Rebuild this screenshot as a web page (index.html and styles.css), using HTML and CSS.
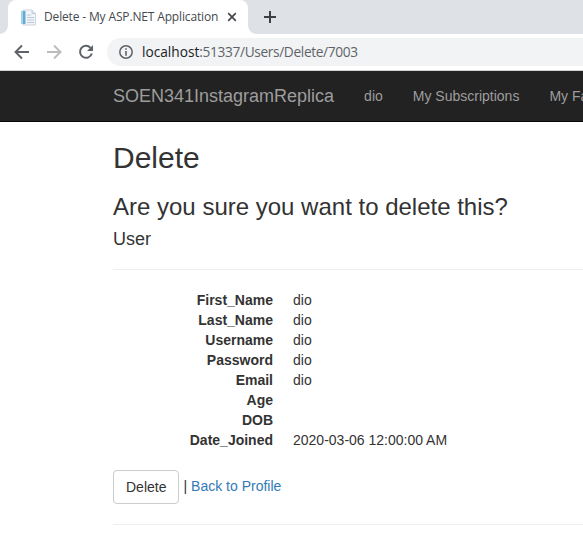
FILE: index.html
```html
<!DOCTYPE html>
<html lang="en"><head><meta charset="utf-8"><title>Delete - My ASP.NET Application</title><link rel="stylesheet" href="styles.css"></head>
<body>
<div class="tabs">
<div class="tab">
<svg class="favicon" width="17" height="17" viewBox="0 0 17 17"><path d="M3 1h9l3.500 3.500v11.500H3z" fill="#f1f5f9" stroke="#ccd3dc"/><path d="M12 1v3.500h3.500" fill="#dce5ef" stroke="#c2cad5"/><path d="M1 2h4.500v13H1z" fill="#62abd4"/><path d="M1 2h2v13H1z" fill="#a4d3e8"/><path d="M7 6h4M7 8.500h7M7 11h7M7 13.500h7" stroke="#bdc7d3"/></svg>
<span class="title">Delete - My ASP.NET Application</span>
<svg class="close" width="10" height="10" viewBox="0 0 10 10"><path d="M1.200 1.200l7.600 7.600M8.800 1.200L1.200 8.800" stroke="#45494d" stroke-width="1.700"/></svg>
</div>
<svg class="plus" width="12" height="12" viewBox="0 0 12 12"><path d="M6 0v12M0 6h12" stroke="#3c4043" stroke-width="2"/></svg>
</div>
<div class="toolbar">
<svg width="16" height="16" viewBox="0 0 16 16"><path d="M15 8H2M8 1.500L1.500 8 8 14.500" fill="none" stroke="#5f6368" stroke-width="1.900"/></svg>
<svg width="16" height="16" viewBox="0 0 16 16"><path d="M1 8h13M8 1.500L14.500 8 8 14.500" fill="none" stroke="#babcbe" stroke-width="1.900"/></svg>
<svg width="16" height="16" viewBox="0 0 16 16"><path d="M12.500 3.800A6 6 0 1 0 13.800 9.500" fill="none" stroke="#5f6368" stroke-width="2"/><path d="M15 1v6H9z" fill="#5f6368"/></svg>
<div class="address"><svg width="14" height="14" viewBox="0 0 14 14"><circle cx="7" cy="7" r="6.200" fill="none" stroke="#5f6368" stroke-width="1.500"/><path d="M7 3.200v1.600M7 6v4.800" stroke="#5f6368" stroke-width="1.600"/></svg><span class="url">localhost<span>:51337/Users/Delete/7003</span></span></div>
</div>
<nav><a class="brand">SOEN341InstagramReplica</a><a>dio</a><a>My Subscriptions</a><a>My Favorites</a></nav>
<main>
<h2>Delete</h2>
<h3>Are you sure you want to delete this?</h3>
<h4>User</h4>
<hr>
<dl><dt>First_Name</dt><dd>dio</dd><dt>Last_Name</dt><dd>dio</dd><dt>Username</dt><dd>dio</dd><dt>Password</dt><dd>dio</dd><dt>Email</dt><dd>dio</dd><dt>Age</dt><dd></dd><dt>DOB</dt><dd></dd><dt>Date_Joined</dt><dd class="date">2020-03-06 12:00:00 AM</dd></dl>
<div class="actions"><button>Delete</button><span>|</span><a>Back to Profile</a></div>
<hr class="footer-rule">
</main>
</body></html>
```

FILE: styles.css
```css
* { box-sizing: border-box; }
body { margin: 0; background: #fff; color: #333; font: 14px/20px "Liberation Sans", Arial, sans-serif; overflow: hidden; }
svg { flex: none; display: block; }
.tabs { height: 34px; background: #dee1e6; display: flex; align-items: center; padding-left: 8px; }
.tab { position: relative; width: 240px; height: 34px; background: #fff; border-radius: 8px 8px 0 0; display: flex; align-items: center; padding: 0 12px; }
.tab::before, .tab::after { content: ""; position: absolute; bottom: 0; width: 8px; height: 8px; }
.tab::before { left: -8px; background: radial-gradient(circle at 0 0, transparent 7.5px, #fff 8px); }
.tab::after { right: -8px; background: radial-gradient(circle at 100% 0, transparent 7.5px, #fff 8px); }
.title { font: 12px/16px "Open Sans", sans-serif; width: 175px; margin-left: 7px; white-space: nowrap; color: #45494d; letter-spacing: -.15px; }
.close { margin-left: 9px; }
.plus { margin-left: 16px; }
.toolbar { height: 37px; display: flex; align-items: center; padding-left: 14px; gap: 16px; border-bottom: 1px solid #d0d1d3; }
.address { flex: 1; height: 28px; margin-left: -3px; border-radius: 14px 0 0 14px; background: #f1f3f4; display: flex; align-items: center; padding-left: 12px; gap: 9px; }
.url { font: 13.7px/20px "Open Sans", sans-serif; color: #202124; white-space: nowrap; }
.url span { color: #5f6368; letter-spacing: -.35px; }
nav { height: 51px; background: #222; border-bottom: 1px solid #080808; padding-left: 113px; display: flex; align-items: center; gap: 30px; color: #9d9d9d; white-space: nowrap; overflow: hidden; }
nav a { flex: none; }
.brand { font-size: 18px; }
main { margin-left: 113px; }
h2, h3, h4 { font-weight: 500; line-height: 1.1; margin: 0; }
h2 { font-size: 30px; padding-top: 19px; }
h3 { font-size: 24px; margin-top: 20px; }
h4 { font-size: 18px; margin-top: 10px; }
hr { border: 0; border-top: 1px solid #eee; margin: 19px 0 20px; }
dl { display: grid; grid-template-columns: 160px 1fr; column-gap: 20px; grid-auto-rows: 20px; margin: 0 0 20px; }
dt { font-weight: 700; text-align: right; }
dd { margin: 0; }
.actions { display: flex; align-items: center; gap: 4px; }
button { font: inherit; color: #333; height: 34px; padding: 6px 12px; border: 1px solid #ccc; border-radius: 4px; background: #fff; }
.actions a, .actions span { margin-bottom: 2px; }
.actions a { color: #337ab7; }
.footer-rule { margin-top: 20px; }
```
